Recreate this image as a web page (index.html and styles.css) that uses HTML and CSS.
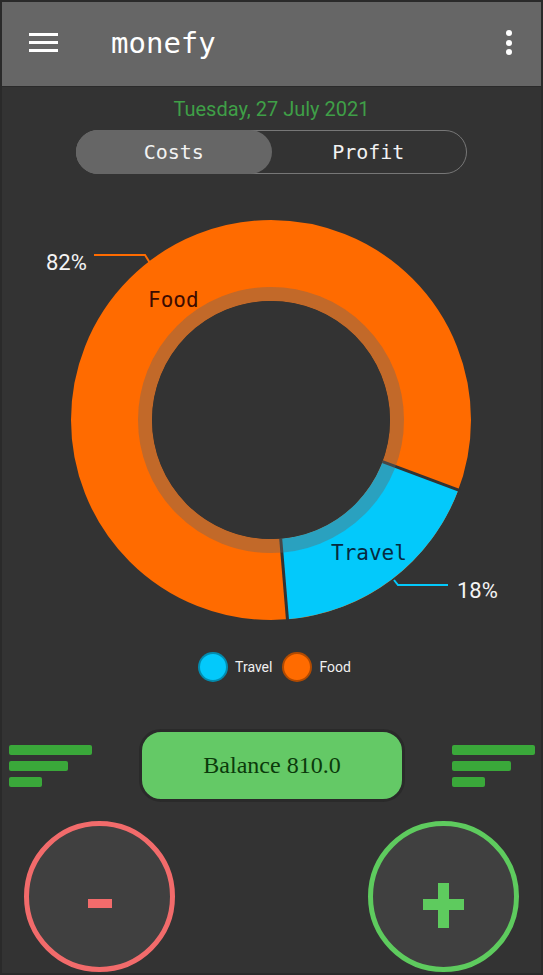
FILE: index.html
```html
<!DOCTYPE html>
<html lang="en">

<head>
    <meta charset="UTF-8">
    <meta name="viewport" content="width=device-width, initial-scale=1.0">
    <title>monefy</title>
    <link rel="stylesheet" href="styles.css">
</head>

<body>
    <div class="app">
        <header class="toolbar">
            <svg class="menu-icon" width="29" height="20" viewBox="0 0 29 20">
                <rect x="0" y="1" width="29" height="3" fill="#fff"/>
                <rect x="0" y="9" width="29" height="3" fill="#fff"/>
                <rect x="0" y="17" width="29" height="3" fill="#fff"/>
            </svg>
            <span class="title">monefy</span>
            <svg class="more-icon" width="6" height="26" viewBox="0 0 6 26">
                <circle cx="3" cy="3" r="3" fill="#fff"/>
                <circle cx="3" cy="13" r="3" fill="#fff"/>
                <circle cx="3" cy="22" r="3" fill="#fff"/>
            </svg>
        </header>

        <div class="date">Tuesday, 27 July 2021</div>

        <div class="switch">
            <button class="switch-item active">Costs</button>
            <button class="switch-item">Profit</button>
        </div>

        <!-- pie chart, coordinates are page pixels -->
        <svg class="chart" width="539" height="466" viewBox="2 0 539 466">
            <circle cx="271" cy="246" r="159.5" fill="none" stroke="#ff6b00" stroke-width="81"/>
            <path d="M458.3 316 A200 200 0 0 1 287.4 445.3 L280.7 364.6 A119 119 0 0 0 382.5 287.7 Z" fill="#03c9fb"/>
            <line x1="382.5" y1="287.7" x2="460" y2="316.6" stroke="#333" stroke-width="3"/>
            <line x1="280.7" y1="364.6" x2="287.6" y2="447" stroke="#333" stroke-width="3"/>
            <circle cx="271" cy="246" r="126" fill="none" stroke="#666" stroke-opacity="0.4" stroke-width="14"/>
            <circle cx="271" cy="246" r="119" fill="#333"/>

            <text class="slice-label food" x="148" y="133">Food</text>
            <text class="slice-label travel" x="331" y="386">Travel</text>

            <polyline points="94,81 145,81 150,89" fill="none" stroke="#ff6b00" stroke-width="2"/>
            <text class="value-label" x="46" y="96">82%</text>
            <polyline points="394,406 398,411 448,411" fill="none" stroke="#03c9fb" stroke-width="2"/>
            <text class="value-label" x="457" y="424">18%</text>
        </svg>

        <div class="legend">
            <span class="legend-dot travel"></span>
            <span class="legend-text">Travel</span>
            <span class="legend-dot food"></span>
            <span class="legend-text">Food</span>
        </div>

        <div class="balance-row">
            <div class="bars">
                <span class="bar long"></span>
                <span class="bar mid"></span>
                <span class="bar short"></span>
            </div>
            <button class="balance">Balance 810.0</button>
            <div class="bars">
                <span class="bar long"></span>
                <span class="bar mid"></span>
                <span class="bar short"></span>
            </div>
        </div>

        <div class="actions">
            <button class="round minus" aria-label="-">
                <svg width="24" height="9" viewBox="0 0 24 9">
                    <rect width="24" height="9" fill="#f26b6b"/>
                </svg>
            </button>
            <button class="round plus" aria-label="+">
                <svg width="41" height="45" viewBox="0 0 41 45">
                    <rect x="0" y="16" width="41" height="11" fill="#5ecb5e"/>
                    <rect x="15" y="0" width="11" height="45" fill="#5ecb5e"/>
                </svg>
            </button>
        </div>
    </div>
</body>

</html>
```

FILE: styles.css
```css
/* monefy main screen */
body {
    margin: 0;
    background-color: #333;
    font-family: Roboto, "Noto Sans", sans-serif;
}

.app {
    height: 975px;
    box-sizing: border-box;
    border: 2px solid #2a2a2a;
    background-color: #333;
}

.toolbar {
    height: 84px;
    display: flex;
    align-items: center;
    padding: 0 29px 0 27px;
    background-color: #666;
    box-shadow: 0 1px 0 #2a2a2a;
}

.menu-icon {
    margin-top: -4px;
}

.title {
    margin-left: 53px;
    margin-top: -2px;
    font-family: "DejaVu Sans Mono", monospace;
    font-size: 29px;
    color: #fff;
}

.more-icon {
    margin-left: auto;
    margin-top: -2px;
}

.date {
    margin-top: 11px;
    height: 24px;
    line-height: 24px;
    text-align: center;
    font-size: 20px;
    color: #3f9f47;
}

.switch {
    width: 391px;
    height: 44px;
    box-sizing: border-box;
    margin: 9px auto 0;
    display: flex;
    border: 1px solid #777;
    border-radius: 22px;
}

.switch-item {
    flex: 1;
    padding: 0;
    margin: -1px 0 0 -1px;
    height: 44px;
    border: none;
    border-radius: 22px;
    background: none;
    font-family: "DejaVu Sans Mono", monospace;
    font-size: 20px;
    color: #f2f2f2;
}

.switch-item.active {
    background-color: #666;
}

.chart {
    display: block;
    overflow: visible;
}

.slice-label {
    font-family: "DejaVu Sans Mono", monospace;
    font-size: 21px;
}

.slice-label.food {
    fill: #3d0c00;
}

.slice-label.travel {
    fill: #062a40;
}

.value-label {
    font-family: Roboto, sans-serif;
    font-size: 22px;
    fill: #f4f4f4;
}

.legend {
    margin-top: 12px;
    height: 30px;
    display: flex;
    align-items: center;
    justify-content: center;
    padding-left: 6px;
}

.legend-dot {
    width: 30px;
    height: 30px;
    box-sizing: border-box;
    border-radius: 50%;
    border: 2px solid rgba(0, 0, 0, 0.3);
}

.legend-dot.travel {
    background-color: #03c9fb;
}

.legend-dot.food {
    background-color: #ff6b00;
    margin-left: 10px;
}

.legend-text {
    margin-left: 7px;
    font-size: 14px;
    color: #f0f0f0;
}

.balance-row {
    margin-top: 47px;
    height: 73px;
    display: flex;
    align-items: center;
    justify-content: space-between;
    padding: 0 6px 0 7px;
}

.bars {
    width: 83px;
    display: flex;
    flex-direction: column;
    gap: 6px;
}

.bar {
    height: 10px;
    border-radius: 2px;
    background-color: #3aa83a;
}

.bar.long {
    width: 83px;
}

.bar.mid {
    width: 59px;
}

.bar.short {
    width: 33px;
}

.balance {
    width: 266px;
    height: 73px;
    box-sizing: border-box;
    border: 3px solid #2a2a2a;
    border-radius: 22px;
    background-color: #64c966;
    font-family: "Liberation Serif", serif;
    font-size: 24px;
    color: #0b3a0b;
}

.actions {
    margin-top: 19px;
    display: flex;
    justify-content: space-between;
    padding: 0 22px;
}

.round {
    width: 151px;
    height: 151px;
    box-sizing: border-box;
    border-radius: 50%;
    border: 5px solid;
    background-color: #404040;
    display: flex;
    align-items: center;
    justify-content: center;
    padding: 0;
}

.round.minus {
    border-color: #f26b6b;
    padding-top: 14px;
}

.round.plus {
    border-color: #5ecb5e;
    padding-top: 17px;
}

.round svg {
    display: block;
}
```
